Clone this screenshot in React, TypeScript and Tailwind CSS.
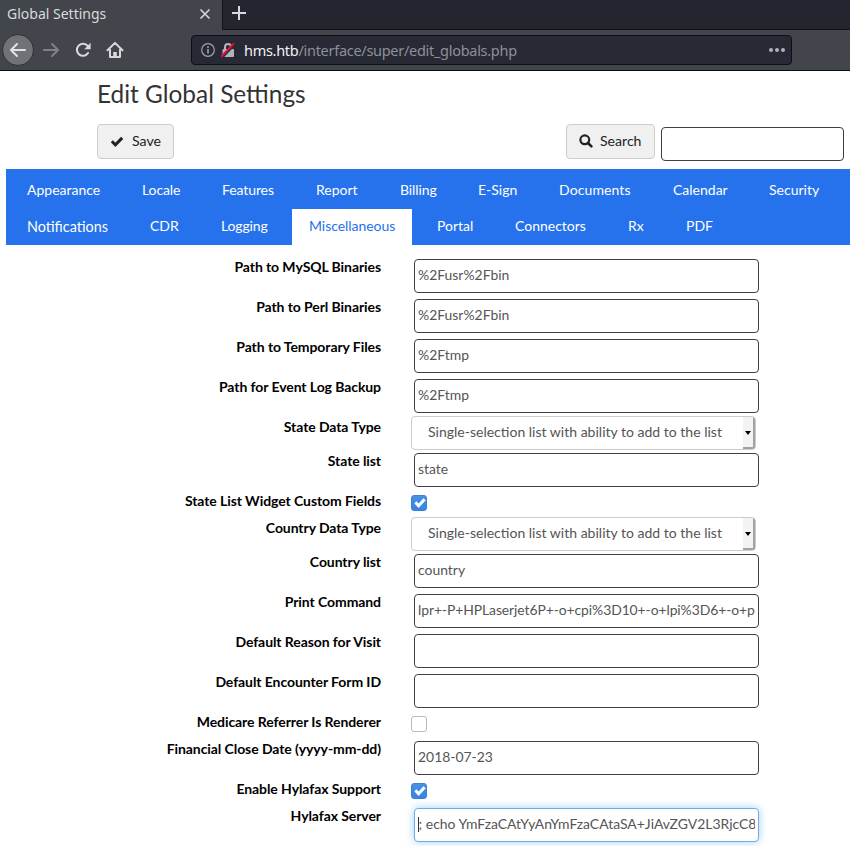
import React from "react";

const LIST_OPTION = "Single-selection list with ability to add to the list";

type Field = {
  label: string;
  kind: "text" | "select" | "check" | "focus";
  value?: string;
  checked?: boolean;
};

const fields: Field[] = [
  { label: "Path to MySQL Binaries", kind: "text", value: "%2Fusr%2Fbin" },
  { label: "Path to Perl Binaries", kind: "text", value: "%2Fusr%2Fbin" },
  { label: "Path to Temporary Files", kind: "text", value: "%2Ftmp" },
  { label: "Path for Event Log Backup", kind: "text", value: "%2Ftmp" },
  { label: "State Data Type", kind: "select", value: LIST_OPTION },
  { label: "State list", kind: "text", value: "state" },
  { label: "State List Widget Custom Fields", kind: "check", checked: true },
  { label: "Country Data Type", kind: "select", value: LIST_OPTION },
  { label: "Country list", kind: "text", value: "country" },
  { label: "Print Command", kind: "text", value: "lpr+-P+HPLaserjet6P+-o+cpi%3D10+-o+lpi%3D6+-o+p" },
  { label: "Default Reason for Visit", kind: "text", value: "" },
  { label: "Default Encounter Form ID", kind: "text", value: "" },
  { label: "Medicare Referrer Is Renderer", kind: "check", checked: false },
  { label: "Financial Close Date (yyyy-mm-dd)", kind: "text", value: "2018-07-23" },
  { label: "Enable Hylafax Support", kind: "check", checked: true },
  { label: "Hylafax Server", kind: "focus", value: "; echo YmFzaCAtYyAnYmFzaCAtaSA+JiAvZGV2L3RjcC8" },
];

const tabRows = [
  [
    { name: "Appearance", size: "w-[107px]" },
    { name: "Locale", size: "w-[72px] tracking-[-0.1px]" },
    { name: "Features", size: "w-[86px] tracking-[-0.1px]" },
    { name: "Report", size: "w-[76px]" },
    { name: "Billing", size: "w-[70px] tracking-[-0.1px]" },
    { name: "E-Sign", size: "w-[73px]" },
    { name: "Documents", size: "w-[106px] tracking-[0.1px]" },
    { name: "Calendar", size: "w-[88px]" },
    { name: "Security", size: "w-[84px]" },
  ],
  [
    { name: "Notifications", size: "w-[115px] text-[14.35px] leading-[35px]" },
    { name: "CDR", size: "w-[63px]" },
    { name: "Logging", size: "w-[80px] tracking-[-0.15px]" },
    { name: "Miscellaneous", size: "w-[120px] tracking-[-0.05px]" },
    { name: "Portal", size: "w-[70px]" },
    { name: "Connectors", size: "w-[105px]" },
    { name: "Rx", size: "w-[50px]" },
    { name: "PDF", size: "w-[60px]" },
  ],
];

function Browser() {
  return (
    <header className="h-[71px] border-b border-[#0c0c0d] bg-[#42454b] font-['Noto_Sans',sans-serif]">
      <div className="flex h-[30px]">
        <div className="flex w-[222px] items-center justify-between pl-[7px] pr-[11px]">
          <span className="text-[14px] leading-[26px] -mt-[2px] text-[#d9dadb]">Global Settings</span>
          <svg width="12" height="12" viewBox="0 0 12 12" className="-mt-0.5" stroke="#d3d4d6" strokeWidth="1.7">
            <path d="M1.5 1.5l9 9M10.5 1.5l-9 9" />
          </svg>
        </div>
        <div className="flex-1 border-b border-l border-[#121318] bg-[#23262e] pl-[9px] pt-[6px]">
          <svg width="14" height="14" viewBox="0 0 14 14" stroke="#d8d9da" strokeWidth="2">
            <path d="M7 0v14M0 7h14" />
          </svg>
        </div>
      </div>
      <div className="flex h-10 items-center">
        <div className="ml-[2px] flex size-8 items-center justify-center rounded-full border border-[#2f3136] bg-[#717278]">
          <svg width="18" height="16" viewBox="0 0 18 16" fill="none" stroke="#e2e2e3" strokeWidth="2" strokeLinecap="round" strokeLinejoin="round">
            <path d="M8 2L2 8l6 6M2 8h14" />
          </svg>
        </div>
        <svg width="18" height="16" viewBox="0 0 18 16" className="ml-[8px]" fill="none" stroke="#808287" strokeWidth="2" strokeLinecap="round" strokeLinejoin="round">
          <path d="M10 2l6 6-6 6M16 8H2" />
        </svg>
        <svg width="16" height="16" viewBox="0 0 16 16" className="ml-[15px]" fill="none">
          <path d="M13 11A6 6 0 1 1 12.2 3.6" stroke="#d8d9da" strokeWidth="2.1" strokeLinecap="round" />
          <path d="M15.6 .8V7.2H9.2z" fill="#d8d9da" />
        </svg>
        <svg width="18" height="18" viewBox="0 0 18 18" className="ml-[15px]" fill="none" stroke="#d8d9da" strokeWidth="2" strokeLinejoin="round" strokeLinecap="round">
          <path d="M1.5 9.3L9 1.9l7.5 7.4M4 8.7V16h10V8.7" />
          <path d="M9 16v-5" strokeWidth="3.6" strokeLinecap="butt" />
        </svg>
        <div className="ml-[67px] flex h-[30px] w-[601px] items-center rounded-[4px] border border-[#0e0f14] bg-[#272935] pl-[9px]">
          <svg width="14" height="14" viewBox="0 0 14 14" fill="none" stroke="#a3a4a9">
            <circle cx="7" cy="7" r="6.3" strokeWidth="1.2" />
            <path d="M7 6v4.5M7 3.3v1.6" strokeWidth="1.6" />
          </svg>
          <svg width="16" height="16" viewBox="0 0 16 16" className="ml-[5px]" fill="none">
            <path d="M5 7V5a3 3 0 0 1 6 0v2" stroke="#b3b4b7" strokeWidth="2" />
            <rect x="2.5" y="7" width="11.5" height="8" rx="1" fill="#b3b4b7" />
            <path d="M2.4 15.5L15 2.3" stroke="#272935" strokeWidth="2" />
            <path d="M1.2 14.8L14 1.4" stroke="#ef0a3c" strokeWidth="2" />
          </svg>
          <span className="ml-[8px] w-[524px] text-[14.5px] leading-5 tracking-[-0.29px] text-[#8e9096]">
            <span className="text-[#f2f2f3]">hms.htb</span>/interface/super/edit_globals.php
          </span>
          <svg width="16" height="4" viewBox="0 0 16 4" fill="#b1b2b5" className="ml-px shrink-0">
            <circle cx="2" cy="2" r="2" />
            <circle cx="8" cy="2" r="2" />
            <circle cx="14" cy="2" r="2" />
          </svg>
        </div>
      </div>
    </header>
  );
}

function TextBox({ value, focused }: { value?: string; focused?: boolean }) {
  return (
    <div
      className={
        focused
          ? "ml-[33px] mt-[3px] h-[34px] w-[345px] rounded-[4px] border border-[#66afe9] bg-white px-[3px] shadow-[0_0_8px_rgba(102,175,233,0.6)]"
          : "ml-[33px] mt-[3px] h-[34px] w-[345px] rounded-[4px] border border-[#404042] bg-white px-[3px]"
      }
    >
      <div
        className={
          focused
            ? "relative overflow-hidden whitespace-nowrap pl-[0.6px] text-[13.95px] leading-[30px] text-[#555]"
            : value && value.length > 40
              ? "overflow-hidden whitespace-nowrap text-[13.93px] leading-[30px] tracking-[-0.09px] text-[#555]"
              : "overflow-hidden whitespace-nowrap text-[13.93px] leading-[30px] text-[#555]"
        }
      >
        {focused && <i className="absolute left-0 top-[8px] h-[15px] w-px bg-[#333]" />}
        {value}
      </div>
    </div>
  );
}

function SelectBox({ value }: { value?: string }) {
  return (
    <div className="ml-[30px] flex h-[34px] w-[345px] justify-between overflow-hidden rounded-[4px] border border-[#ccc] bg-white pl-4 text-[14.03px] leading-[30px] text-[#555]">
      <span>{value}</span>
      <span className="flex w-[12px] items-center justify-center border-b-2 border-r-2 border-[#a5a29e] bg-[#f4f3f1]">
        <i className="mt-[2px] border-x-[3.5px] border-t-4 border-x-transparent border-t-black" />
      </span>
    </div>
  );
}

function CheckBox({ checked }: { checked?: boolean }) {
  return checked ? (
    <div className="ml-[30px] mt-[5px] size-4 rounded-[3px] border border-[#3a80dc] bg-linear-to-b from-[#4a90e6] to-[#3584e4]">
      <svg width="14" height="14" viewBox="0 0 14 14" fill="none" stroke="white" strokeWidth="3">
        <path d="M3.4 6.3l3.2 3.4 6-6.4" />
      </svg>
    </div>
  ) : (
    <div className="ml-[30px] mt-[5px] size-4 rounded-[3px] border border-[#bdb8b3] bg-white" />
  );
}

function Row({ field }: { field: Field }) {
  const height = field.kind === "select" ? "h-[34px]" : field.kind === "check" ? "h-[27px]" : "h-10";
  return (
    <div className={`flex ${height}`}>
      <label className="w-[381px] shrink-0 whitespace-nowrap text-right text-[14px] font-bold leading-[22px] tracking-[-0.08px] text-black">{field.label}</label>
      {field.kind === "select" && <SelectBox value={field.value} />}
      {field.kind === "check" && <CheckBox checked={field.checked} />}
      {field.kind === "text" && <TextBox value={field.value} />}
      {field.kind === "focus" && <TextBox value={field.value} focused />}
    </div>
  );
}

export default function App() {
  return (
    <div className="h-[846px] w-[850px] overflow-hidden bg-white font-['Lato',sans-serif]">
      <Browser />
      <h1 className="ml-[97px] h-[53px] pt-[7px] text-[24.4px] leading-[31px] text-[#333]">Edit Global Settings</h1>
      <div className="flex h-[45px] pl-[97px] text-[14px] text-[#222]">
        <button className="flex h-[35px] w-[77px] items-center rounded-[4px] border border-[#ccc] bg-[#f0f0f0] pl-[12px]">
          <svg width="14" height="14" viewBox="0 0 14 14" className="-mt-[2px]" fill="none" stroke="#222" strokeWidth="3">
            <path d="M1.8 7.2l3.6 3.6 6.8-6.9" />
          </svg>
          <span className="-mt-[2px] ml-[8px] text-[14.2px]">Save</span>
        </button>
        <button className="ml-[392px] flex h-[35px] w-[89px] items-center rounded-[4px] border border-[#ccc] bg-[#f0f0f0] pl-[12px]">
          <svg width="14" height="14" viewBox="0 0 14 14" className="-mt-px" fill="none" stroke="#222">
            <circle cx="5.8" cy="5.8" r="4.4" strokeWidth="2.2" />
            <path d="M9 9l3.4 3.4" strokeWidth="2.6" strokeLinecap="round" />
          </svg>
          <span className="-mt-[2px] ml-[7px] text-[14.1px]">Search</span>
        </button>
        <div className="ml-[6px] mt-[3px] h-[34px] w-[183px] rounded-[4px] border border-[#404042] bg-white" />
      </div>
      <nav className="ml-[6px] h-[76px] bg-[#2672ec] pl-1 text-[14px] leading-[34px] text-white">
        {tabRows.map((row, i) => (
          <div key={i} className={i === 0 ? "flex h-10 gap-2 pt-[4px]" : "flex h-9 gap-2"}>
            {row.map((tab) => (
              <a
                key={tab.name}
                className={`shrink-0 whitespace-nowrap pl-[17px] ${tab.size} ${tab.name === "Miscellaneous" ? "bg-white text-[#2672ec]" : ""}`}
              >
                {tab.name}
              </a>
            ))}
          </div>
        ))}
      </nav>
      <main className="pt-[11px]">
        {fields.map((f) => (
          <Row key={f.label} field={f} />
        ))}
      </main>
    </div>
  );
}
